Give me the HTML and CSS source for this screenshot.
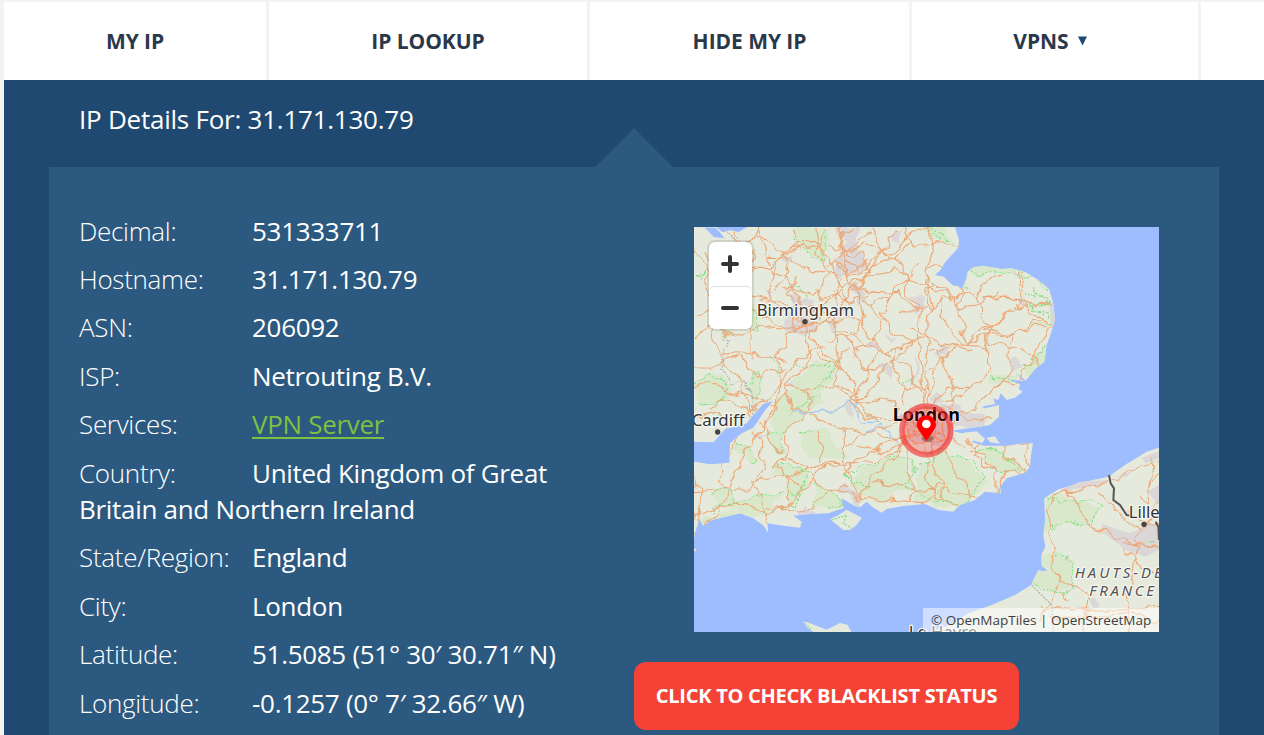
FILE: index.html
```html
<!DOCTYPE html>
<html lang="en">
<head>
<meta charset="utf-8">
<title>IP Details</title>
<link rel="stylesheet" href="styles.css">
</head>
<body>
<nav class="nav">
  <a class="nav-item nav-myip">MY IP</a>
  <a class="nav-item nav-lookup">IP LOOKUP</a>
  <a class="nav-item nav-hide">HIDE MY IP</a>
  <a class="nav-item nav-vpns">VPNS<svg class="caret" viewBox="0 0 10 10"><path d="M0 0h10L5 10z"/></svg></a>
  <span class="nav-item nav-rest"></span>
</nav>
<main class="main">
  <h1 class="title">IP Details For: 31.171.130.79</h1>
  <section class="panel">
    <div class="details">
      <p class="row"><span class="label">Decimal:</span><span>531333711</span></p>
      <p class="row"><span class="label">Hostname:</span><span>31.171.130.79</span></p>
      <p class="row"><span class="label">ASN:</span><span>206092</span></p>
      <p class="row"><span class="label">ISP:</span><span>Netrouting B.V.</span></p>
      <p class="row"><span class="label">Services:</span><a class="link">VPN Server</a></p>
      <p class="row"><span class="label">Country:</span><span>United Kingdom of Great Britain and Northern Ireland</span></p>
      <p class="row"><span class="label">State/Region:</span><span>England</span></p>
      <p class="row"><span class="label">City:</span><span>London</span></p>
      <p class="row"><span class="label">Latitude:</span><span>51.5085 (51° 30′ 30.71″ N)</span></p>
      <p class="row"><span class="label">Longitude:</span><span>-0.1257 (0° 7′ 32.66″ W)</span></p>
    </div>
    <div class="side">
      <div class="map">
        <svg class="map-canvas" viewBox="12 6 1395 1215">
          <defs>
            <filter id="wiggle" filterUnits="userSpaceOnUse" x="0" y="0" width="1420" height="1230" color-interpolation-filters="sRGB">
              <feTurbulence type="fractalNoise" baseFrequency="0.022" numOctaves="2" seed="4"/>
              <feDisplacementMap in="SourceGraphic" scale="42" xChannelSelector="R" yChannelSelector="G"/>
            </filter>
            <clipPath id="land"><path id="coast" d="M12 6H795L807 45 805 68 785 90 765 112 752 135 735 150 762 155 778 172 790 182 805 183 815 193 828 165 833 140 850 127 880 122 935 132 965 130 1005 140 1045 165 1077 192 1090 235 1095 285 1083 325 1070 360 1063 410 1035 432 1007 467 975 440 1000 468 955 463 990 478 986 492 998 500 975 518 950 525 932 505 925 525 910 520 915 537 875 545 885 550 927 540 927 575 900 600 860 607 820 612 785 617 815 625 850 622 860 635 845 650 880 662 950 662 985 657 1029 655 1023 690 1020 725 1005 743 950 760 930 785 933 805 885 800 855 825 810 840 790 860 745 855 705 837 640 843 590 852 575 863 550 848 530 830 510 847 495 843 455 820 460 850 440 856 415 865 350 868 310 872 335 890 330 908 280 902 232 895 235 925 222 903 190 880 150 865 100 877 65 885 40 902 28 883 15 925 12 945V710L60 718 118 713 120 655 155 625 190 608 222 560 248 528 220 537 188 573 170 595 150 602 105 612 90 630 70 652 12 650Z"/></clipPath>
          </defs>
          <rect class="sea" x="12" y="6" width="1395" height="1215"/>
          <use class="soil" href="#coast"/>
          <path class="sea" d="M22 6h20l30 30 32 4-16-20-12-12zM78 6h94l-26 15-26-5-22 6z"/>
          <g clip-path="url(#land)">
           <g filter="url(#wiggle)">
            <path class="park" d="M305 6l8 40 35 25 22 32 25-3 30-42-5-50zM700 6l10 30 60 18 5-15-20-33zM12 485l60-60 50 60-10 40-80 15zM180 480l10-35 20-5 8 20-15 70-20 5zM245 560l20-40 40-25 15-40 65-45 20 10-5 30 30-25 15 10-50 70 12 30-60 30-100 100zM90 320l50 12-20-20zM180 235l20-10 15 65-10 40-25-20zM60 820l-5-15 30-18 40 5 15 55-90 35-15 25 25-15 100-25zM150 860l-15-30 100-20 50-15-50 75-100 10zM250 745l20-30 70 15 20 35-25 50-45 25-10-90zM330 620l40-18 30 10 80 90-40 5-100-25-15-20zM370 780l60 20 35 40-90 10zM470 770l70-50 80-25 40 10 5 90-90 30-70-20-30-20zM690 715l60-35 70 25 70 70-60 55-80 25-80-30zM860 680l70-10 70 65-60 15-30-30zM230 625l50-15-5 70-20-5zM130 660l45 10 30 30-30 10-45-35zM815 180l15-60 130 0 80 40-60-15-145-5-5 45zM1000 420l80-50 0 40-50 60zM895 450l90 0-30 25-60-5z"/>
            <path class="town" d="M445 6h60l-10 45 40 70-35 25-45-5-15 20-10-20 25-60 10-30-20-20zM605 20l30-14-10 50-20-12zM280 280l40-10 60-10 5 50-40 25-50-15zM265 95l40-5-5 25-20 5zM535 355l35 0-15 25zM570 415l25 10 5 30-20-10zM670 220l30-5-5 50-25-5zM415 285l30-10-5 50-20-10zM585 320l30 20-10 15zM480 195l25-20 20 40-20 20-10-25zM220 205l25-5-10 25zM300 215l80 10-20 20-50-5zM980 220l25-5 10 25-20 10-15-12zM960 410l25-10 10 40-35 0zM745 370l25-15 5 25-30 15zM1076 232l16 0 5 60-14 5zM675 395l10 0-5 90-10-10zM320 850l30-15 30 35-55 0zM440 790l20-15 20 25 45 10-15 30zM630 560l60-20 100 0 60 20 40 10-30 30-60 5 0 40-60 25-90-20zM725 510l30 0 5 25-30 5zM855 575l40 10-30 18zM190 615l35 10-15 15zM460 525l30 5-5 55-15-5zM280 480l30-5-10 15z"/>
            <path class="path-green" d="M305 30l15 35 30 10 20 30 25-5 12-35-5-55M700 6l55 42M725 6l55 50M315 420l70 10 30-20-10 30 40-35-20 40-40 40 5 30-40 10-50 50M12 155l30 0 5-20-10 30-25-10M65 600l20-30 35 20 30-25M180 240l20 20 10 65-20-10M245 390l15 30-10 30 10-5M135 830l60-10 90-30 45 25-20 25-85 30M250 720l40-5 65 30-30 70M330 620l30-10 10 5M60 810l30-20 30 5 5 35-60 15 0 20M540 790l-80-35 60-30 90-30 60 5 10 30-60 80M690 715l60-35 90 30 45 50-60 70-90 10-80-60M860 680l70-5 60 60-60 10-60-40M825 165l10-24 120 4 70 10 60 40M1010 205l60 20 10 10-70 10 60 20 10 35-60 0M1065 360l-10 30-60 35M895 455l80 10M830 145l-10 40 20 10M1030 190l40 50-50-10 35 40M180 480l10-35 20-5 8 20-15 70M12 490l55-55 40 50-10 40-70 15M310 185l15 0 20 30-10 10M640 465l30-5 10 10M230 630l50-15-5 70-30-15M140 665l35 5 30 30-30 10M370 780l50 15 40 40-40 10"/>
            <path class="river" d="M320 560l30 12 40-10 50-5 40-30 40 60 50 10 60 60M520 630l60-30M495 550l10-30"/>
            <path class="road" d="M200 6l25 70 15 60 60 35 30 70 10 45-45 50-30 60 5 70-5 70-60 80-40 70-45 90-30 80-40 45-55 35-55-25M375 6l5 50 40 50 25 60 30 70-50 50-80 10-30 20M450 6l10 90 20 80 35 50 10 80 50 70 75 50 45 70 20 60M545 6l25 75 65 35 25 100 25 30 5 120 10 110 10 80M620 6l-40 60-25 50-45 60-40 40-55 65-60 40 30 40 60 60 40 50 20 60 60 70M345 290l-60 20-60-5-90 25-70-30-50 30M345 290l-80-60-95-15-80-70-45-60M345 290l10 100-15 40-60 50 70 10 100-10 60 35M345 290l50-50 70-50 70-40 90-10 90 50 70 20 30 35 50-5 60-35M410 350l60-20 50 20 60 30 70-20 60-30 50 25 85 25M720 6l10 60-15 60-5 50 15 60-15 60 10 60-15 70 15 110M720 170l40 20 20 35 30-20 0-40M815 200l40 10 25 60 20 40 0 45 100 20 60 50 30 0M815 200l-10 60 25 100 40-50 60-30 60-50 15-100M880 220l100 0 60 15 50 5M1000 245l-55 20-60 45 90 20 60-40 50 5M975 328l50-20 50 0M830 360l60-35 80 5-10 60 0 60-40 30-60 60-50 30-30 40M900 310l-10 60 0 60-30 60-90 0-40 50M1005 430l-30 50-40-10-30 25M1095 290l-45 60-15 40-35 30M1000 245l70 50M720 380l30-10 60-10 80 5M750 370l20 70 20 60-20 60M720 440l30-30 50-50M735 430l-15 80M800 210l-45 10-5 50 40 50 30 40M720 120l60 10 25-60-60-20-40 10"/>
            <path class="road" d="M12 750l20 60 5 80-10-10M12 880l60-30 60-20 60 15 40 25 10 50M100 795l-15-30 15-40 20-40 25-50M185 770l100-20 70-20 60-15 40 0M120 795l60 0 50-60-15-30 0-60-30-30M190 770l20 60 20 45 60-30 90-90 20-30 55-5 100-15 60-20 40-30M290 610l0 60-20 50 20 60 0 50M360 740l20 40 30 15 60-15M380 615l15 50 0 45M460 615l0 70 10 60 20 40 20 30 90 10 60 5 60 5M465 750l40-50 80-40 60-30M440 790l50 25 30 10M520 820l20-60 60-50 40-40 10-40M550 770l80 15 70 5 70-10M660 680l0 60 10 50-10 40M705 670l0 60 15 50 20 50 60 5M725 660l0 60 40 70-15 35M760 660l20 50 45 60 10 50M840 670l50 30 25 30 0 60-40 35M855 670l40-15 90 5 35-5M930 660l10 30 50 30 20 30M1020 660l-15 50 10 30M705 830l60-40 90 30 60-20 30-60 50 5M820 640l40 30-10 20 60 40M560 630l40 10 50 0M505 635l-40 20M350 730l-60-30-40 20M225 615l20 50 30 20M230 840l60 20 90-20 20-40M12 800l60-5 40-10M380 580l60 30 80 20 80-25 50-40"/>
            <path class="road" d="M12 80l50 60-20 60 40 50-25 60 30 90 60-20 80 10 60 20M12 270l50-20 70-20 60 20 40 30 60 30M12 420l70 0 60-30 60 60 80-10M12 500l50-30 50 30 90 20 60 30M55 560l40-40 70 30 60 60M120 590l60-40 50-20 60-80 40-60 80-20M100 20l90 60-20 50 60 0 70-60 80-5M230 100l60 0 70 40 80 0M260 100l-30 110 50 60M200 120l-30 90 10 80 0 110M130 20l30 30 60-10 70 40 40-30 60 0M420 60l50 20 60-20 70 30 60-60 60-10M480 180l80 20 70 0 50 55 30-20M520 220l60 60-30 70-60 20-50-40-10-80M610 200l-30 60 20 50 60 50-60 60-70 20-50-80M660 320l50 0M590 420l-30 60-70 50-60-60 20-40-70-40M620 370l-20 70 60 50 50-10M560 370l-30 90-50 70 60 50 60 0 60-30M280 480l30 70 70 30M290 500l-40 70-60 60M490 530l80-10 60 30M650 480l-10 60M400 6l-20 80 40 60-50 60-90-20M330 150l-30 60 30 60M420 200l60 30 50-30M440 330l10 90 40 70M310 6l20 70M660 50l-60 60-60 20M570 80l-50 60M690 110l-60 60-40 60M540 20l-70 60-60 40M350 490l10 70-80 60M110 615l5-20-30-30-70 15M640 6l20 50 50 10"/>
            <path class="road" d="M680 620l-40-30-20-40M680 620l-30 20-20 30M700 620l60 20 60 20M700 620l30 40M720 570l40-20 50 20 60 15 40-10M760 530l60-20 30-20M705 570l-10 40-30-20 40-30 40 20-10 60-30 10-40-30M770 580l30 30M320 310l30-20 40 0 10-30-30-15-40 5-25 25 10 45 40 10 30-25M465 110l50 30M455 150l-30 80 30 50M300 270l15-30M440 100l40 50 60-50"/>
            <path class="road" d="M640 610l20-40 50-12 45 22 12 45-35 35-55 0-37-50M655 590l100 50M660 640l90-60M710 560l0 100M640 615l120 5M480 6l-30 30 20 60 50-10 20 50-60 20-40-40M430 290l20 30 50 10 20-40-40-10-50 10M735 180l-25 20 5 60 45-30M860 220l20-50 60-15M990 140l-5 80M980 225l30 0 5 25-35 5-10-20M210 6l-20 40-60 20M350 60l-70 30 20 60-50 40M100 180l70 30M90 400l60 60 30 100M380 180l20 40 40-10M540 240l60-30M470 370l-30 50M620 270l50-20M340 790l-60-40M500 660l90 20 70-30"/>
            <path class="frontier" d="M120 30l30 25 10 50M90 310l35 30-20 40-10 50 30 45 40 0 25 35-2 60"/>
           </g>
          </g>
          <path class="soil" d="M420 883l25-12 25-17 45 24-15 22-20 15-20 0zM820 623l40-4 25 22-8 13-35-10zM890 638l25-4 15 22-30-4zM340 1190l12 2 58 22 40-20 22 5 12 22H370l-20-15zM12 970l8 2-8 10z"/>
          <path class="path-green" d="M425 885l45-15-10 25 25 15M345 1195l20 20"/>
          <path class="soil" d="M1407 668L1370 680 1305 720 1255 755 1185 770 1105 793 1063 820 1065 890 1060 930 1066 965 1054 990 1055 1020 1080 1045 1045 1035 1023 1080 975 1110 905 1140 835 1165 795 1190 740 1217 740 1221H1407Z"/>
          <path class="park" d="M1068 820l40-20 20 20 60 10 40 20-15 35-45 20-50-15-55 35zM1055 990l45-10 50 35-10 70-50 20-65-30 20-35 40-5-30-10z"/>
          <path class="town" d="M1235 895l25 10 60 20 60-30 27 5v75l-40 20-60-20-25-20-40-30zM1110 795l60-25 90-5-60 20-80 12zM1355 700l35-15 17-5v20l-40 15zM1195 1120l20 0 15 25-20 5zM1370 800l37-20v60zM1280 755l50-20-20 20z"/>
          <g filter="url(#wiggle)">
            <path class="path-green" d="M1070 820l20-5 20 20 30-10 30 20 0-20 60 20-20 35-40 20-20-15-60 25-20-5M1085 995l30-10 40 30-5 80-50 10-70-25M1380 950l20 5"/>
            <path class="road" d="M1095 805l60 0 100-35 60-30 60-25 42 0M1095 800l-25 65 0 30 15 60 5 80 25 25-40 80-30 60M1130 805l70 95 80 40 60 20 35-70 40 0M1290 960l50-5 75 10M1340 960l-10 40-15 130 0 100M1300 970l30 30 85 60M1105 1060l40 20 50 40-15 80M1050 1145l90 5 275-2M1230 800l50 60 70 60 20-30 45-60M1345 820l40 15-5-80 5-70M1375 890l-60-30M1415 730l-30 40M1185 1155l0 75M1080 1180l160-10 70-10 105 30M1140 1130l-25-30"/>
          </g>
          <path class="border" d="M1257 750l5 25 10 15-2 35 20 15 20 30 12 2M1397 890l8 15 2 40"/>
          <path class="frontier" d="M1025 1080l60 60 5 80"/>
          <text class="city" x="200" y="272" textLength="292" lengthAdjust="spacingAndGlyphs">Birmingham</text>
          <circle class="dot" cx="345" cy="290" r="8"/>
          <text class="city" x="5" y="604" textLength="159" lengthAdjust="spacingAndGlyphs">Cardiff</text>
          <circle class="dot" cx="83" cy="621" r="8"/>
          <text class="city" x="1316" y="880">Lille</text>
          <circle class="dot" cx="1362" cy="898" r="8"/>
          <text class="region" x="1154" y="1059" textLength="284">HAUTS-DE-</text>
          <text class="region" x="1198" y="1112" textLength="194">FRANCE</text>
          <text class="city" x="656" y="1239">Le Havre</text>
          <text class="capital" x="608" y="587" textLength="202" lengthAdjust="spacingAndGlyphs">London</text>
          <circle class="halo" cx="709" cy="616" r="73"/>
          <ellipse class="pin-shadow" cx="713" cy="640" rx="18" ry="11"/>
          <path class="pin" d="M709 648L690 621C684 613 680 606 680 598A29 27 0 0 1 738 598C738 606 734 613 728 621z"/>
          <circle class="pin-hole" cx="709" cy="597" r="13"/>
        </svg>
        <div class="zoom">
          <span class="zoom-btn"><svg class="zoom-icon" viewBox="0 0 18 18"><path d="M9 2v14M2 9h14"/></svg></span>
          <span class="zoom-btn"><svg class="zoom-icon" viewBox="0 0 18 18"><path d="M2 9h14"/></svg></span>
        </div>
        <div class="credit">© OpenMapTiles | OpenStreetMap</div>
      </div>
      <a class="button">CLICK TO CHECK BLACKLIST STATUS</a>
    </div>
  </section>
</main>
</body>
</html>
```
FILE: styles.css
```css
* { box-sizing: border-box; }
body {
  margin: 0;
  height: 735px;
  overflow: hidden;
  padding: 2px 0 0 4px;
  background: #f3f3f4;
  font-family: "Open Sans", "Noto Sans", sans-serif;
  color: #fff;
}
.nav { display: flex; gap: 3px; height: 78px; }
.nav-item {
  display: flex;
  align-items: center;
  justify-content: center;
  gap: 9px;
  background: #fff;
  color: #2b384a;
  font-size: 21px;
  font-weight: 700;
  letter-spacing: -.05px;
}
.nav-myip { width: 262px; }
.nav-lookup { width: 318px; }
.nav-hide { width: 319px; }
.nav-vpns { width: 286px; padding-right: 10px; }
.nav-rest { flex: 1; }
.caret { width: 9px; height: 10px; fill: #1f4971; }
.main {
  height: 655px;
  padding: 21px 45px 0;
  background: #1f4971;
}
.title {
  margin: 0 0 30px 30px;
  font-size: 26px;
  line-height: 36px;
  font-weight: 400;
  letter-spacing: -.24px;
}
.panel {
  position: relative;
  display: flex;
  height: 600px;
  padding: 45px 30px 0;
  background: #2c597f;
}
.panel::before {
  content: "";
  position: absolute;
  left: 546px;
  top: -39px;
  border: solid transparent;
  border-width: 0 39px 39px;
  border-bottom-color: #2c597f;
}
.details { width: 555px; padding: .5px 45px 0 0; }
.row {
  margin: 0 0 12px;
  font-size: 26px;
  font-weight: 450;
  letter-spacing: -.3px;
  line-height: 36.4px;
}
.label { display: inline-block; width: 173px; font-weight: 300; }
.link { color: #7dc142; font-weight: 400; text-decoration: underline; text-decoration-thickness: 2px; text-underline-offset: 3px; }
.side { padding-top: 15px; }
.map {
  position: relative;
  width: 465px;
  height: 405px;
  margin-left: 60px;
  overflow: hidden;
}
.map-canvas { display: block; width: 465px; height: 405px; }
.sea { fill: #9ebdff; }
.soil { fill: #e6eadc; }
.park { fill: #d9e8cb; }
.town { fill: #dbd7d8; }
.path-green { fill: none; stroke: #80dc80; stroke-width: 3.5; stroke-dasharray: 6 4; }
.river { fill: none; stroke: #a0c8f0; stroke-width: 4; }
.road { fill: none; stroke: #eca878; stroke-width: 3.4; stroke-linejoin: round; }
.frontier { fill: none; stroke: #b3b5b1; stroke-width: 4; stroke-dasharray: 6 4; }
.border { fill: none; stroke: #555; stroke-width: 6; }
.city, .region, .capital {
  font-family: "Noto Sans", sans-serif;
  fill: #333;
  stroke: #f7f8f3;
  stroke-width: 7;
  stroke-linejoin: round;
  paint-order: stroke;
}
.city { font-size: 50px; }
.region { font-size: 45px; font-style: italic; fill: #555; }
.capital { font-size: 52px; font-weight: 700; fill: #000; stroke-width: 5; }
.dot { fill: #444; }
.halo { fill: rgba(255, 0, 0, .22); stroke: rgba(245, 45, 45, .62); stroke-width: 17; }
.pin { fill: #f00; }
.pin-shadow { fill: rgba(60, 40, 40, .4); }
.pin-hole { fill: #fff; }
.zoom {
  position: absolute;
  left: 15px;
  top: 15px;
  width: 43px;
  height: 87px;
  border-radius: 6px;
  background: #fff;
  box-shadow: 0 0 0 2px rgba(0, 0, 0, .1);
}
.zoom-btn { display: flex; align-items: center; justify-content: center; height: 44px; padding-right: 1px; }
.zoom-btn + .zoom-btn { height: 43px; border-top: 1px solid #ddd; border-radius: 6px; }
.zoom-icon { width: 18px; height: 18px; fill: none; stroke: #333; stroke-width: 4; stroke-linecap: round; }
.credit {
  position: absolute;
  right: 0;
  bottom: 0;
  width: 236px;
  height: 24px;
  padding-left: 8px;
  background: rgba(255, 255, 255, .5);
  color: #404040;
  font-size: 13.5px;
  line-height: 24px;
  white-space: nowrap;
}
.button {
  display: flex;
  align-items: center;
  justify-content: center;
  width: 385px;
  height: 68px;
  margin-top: 30px;
  padding-bottom: 1px;
  border-radius: 12px;
  background: #f44336;
  font-size: 20px;
  font-weight: 700;
  letter-spacing: -.26px;
}
```
